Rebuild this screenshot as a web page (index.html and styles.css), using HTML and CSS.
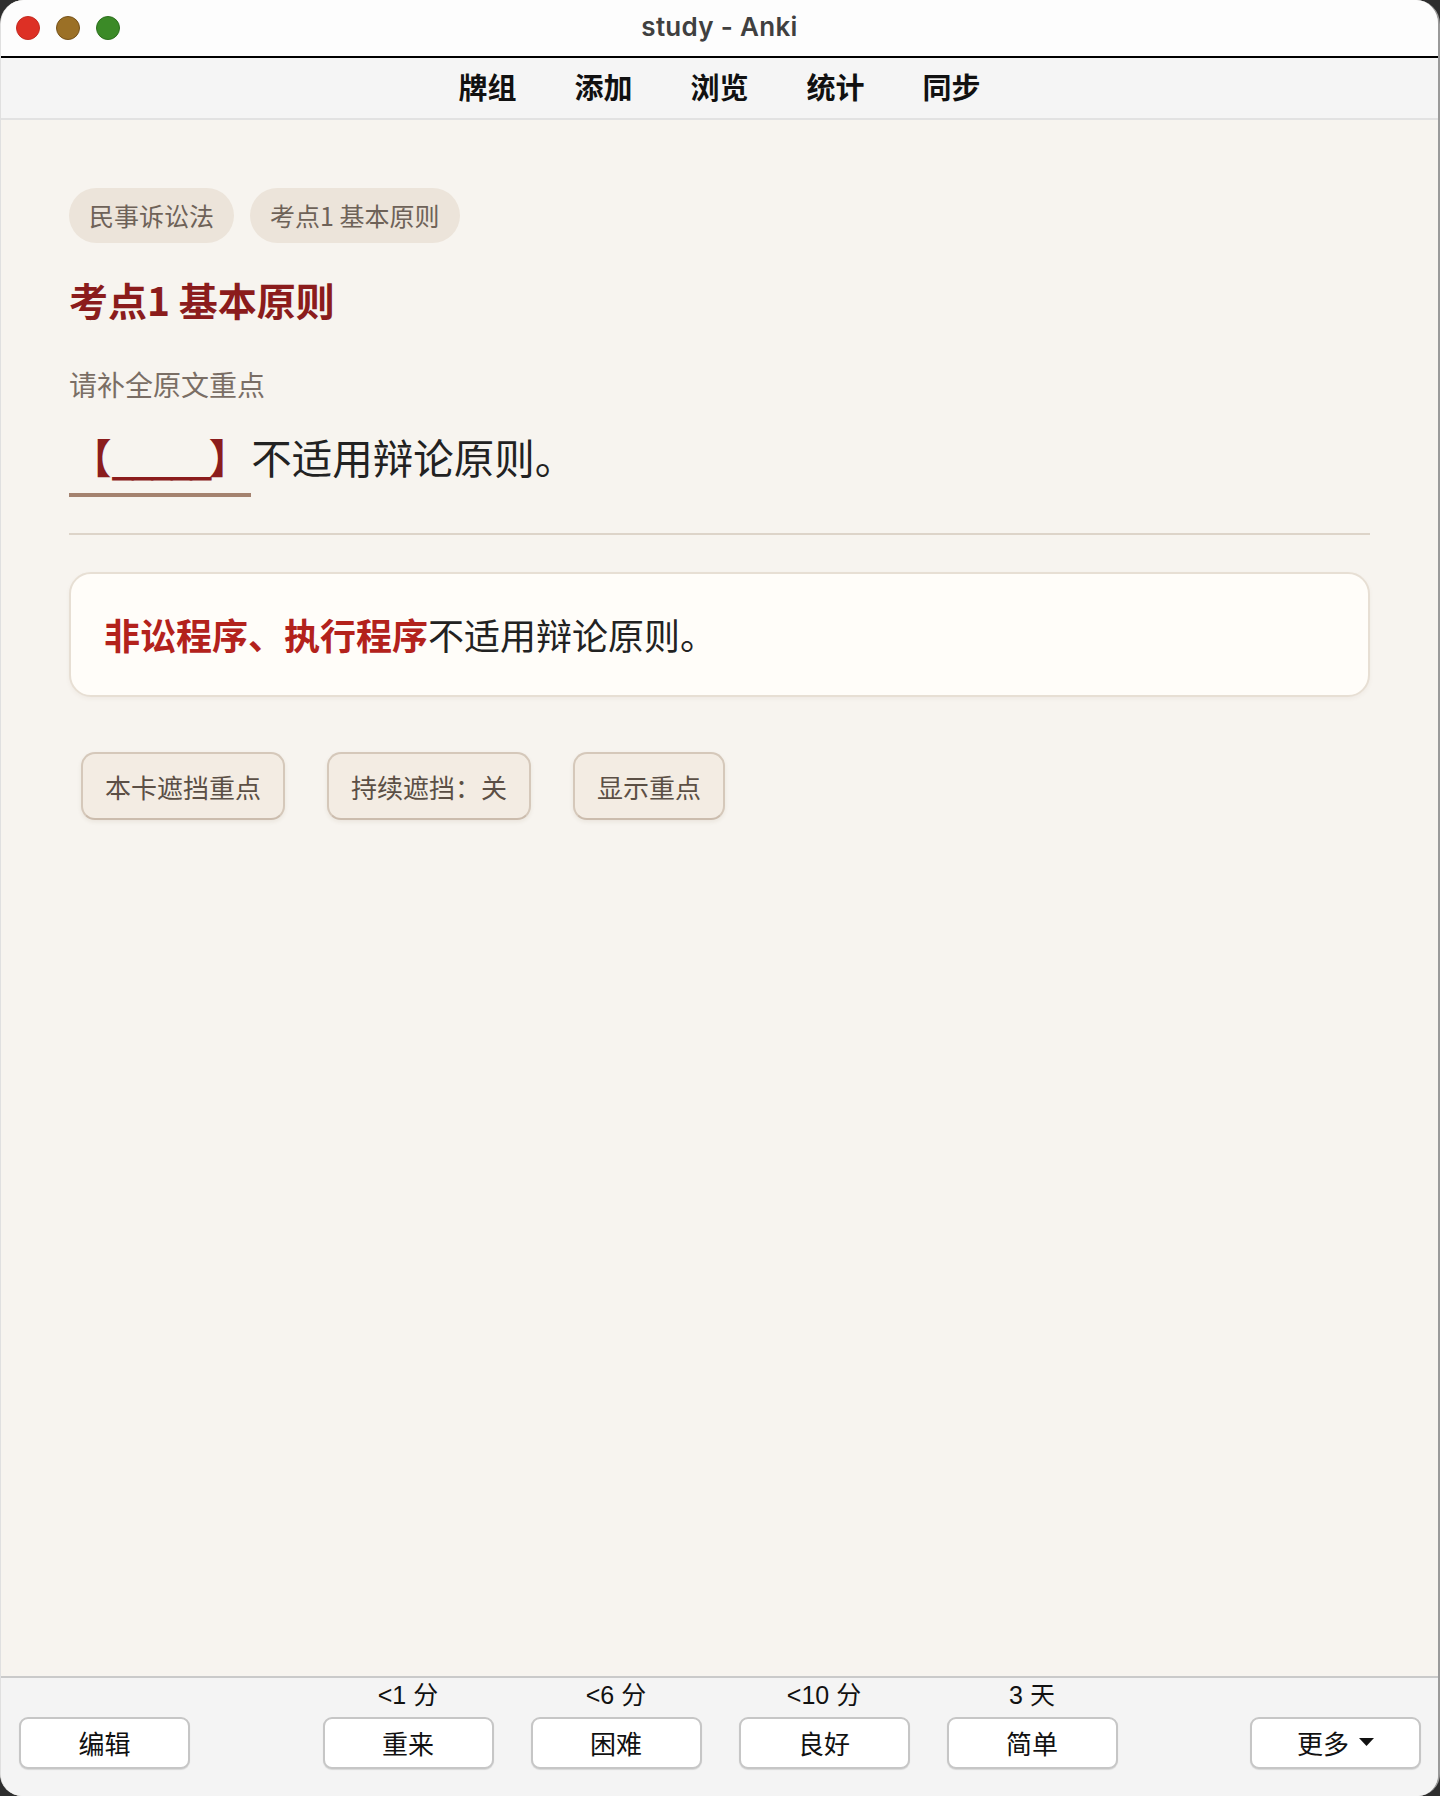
FILE: index.html
```html
<!DOCTYPE html>
<html lang="zh-CN">
<head>
    <meta charset="UTF-8">
    <meta name="viewport" content="width=device-width, initial-scale=1.0">
    <title>study - Anki</title>
    <link rel="stylesheet" href="styles.css">
</head>
<body>
    <div class="window">
        <header class="titlebar">
            <div class="lights">
                <span class="light red"></span>
                <span class="light yellow"></span>
                <span class="light green"></span>
            </div>
            <div class="title">study - Anki</div>
            <div></div>
        </header>

        <nav class="toolbar">
            <a class="nav-item">牌组</a>
            <a class="nav-item">添加</a>
            <a class="nav-item">浏览</a>
            <a class="nav-item">统计</a>
            <a class="nav-item">同步</a>
        </nav>

        <main class="card">
            <div class="tags">
                <span class="tag">民事诉讼法</span>
                <span class="tag">考点1 基本原则</span>
            </div>

            <h1 class="card-title">考点1 基本原则</h1>

            <p class="prompt">请补全原文重点</p>

            <p class="cloze-line"><span class="cloze">【<span class="blank">_____</span>】</span>不适用辩论原则。</p>

            <div class="divider"></div>

            <div class="answer">
                <strong>非讼程序、执行程序</strong>不适用辩论原则。
            </div>

            <div class="actions">
                <button class="action-btn">本卡遮挡重点</button>
                <button class="action-btn">持续遮挡：关</button>
                <button class="action-btn">显示重点</button>
            </div>
        </main>

        <footer class="bottombar">
            <div class="side side-left">
                <button class="bar-btn">编辑</button>
            </div>
            <div class="answers">
                <div class="answer-col">
                    <div class="due">&lt;1 分</div>
                    <button class="bar-btn">重来</button>
                </div>
                <div class="answer-col">
                    <div class="due">&lt;6 分</div>
                    <button class="bar-btn">困难</button>
                </div>
                <div class="answer-col">
                    <div class="due">&lt;10 分</div>
                    <button class="bar-btn">良好</button>
                </div>
                <div class="answer-col">
                    <div class="due">3 天</div>
                    <button class="bar-btn">简单</button>
                </div>
            </div>
            <div class="side side-right">
                <button class="bar-btn more">更多
                    <svg class="caret" width="15" height="8" viewBox="0 0 15 8"><path d="M0 0 H15 L7.5 8 Z" fill="#111"/></svg>
                </button>
            </div>
        </footer>
    </div>
</body>
</html>
```

FILE: styles.css
```css
body {
    margin: 0;
    background-color: #2e2e2e;
    font-family: "Noto Sans CJK SC", "Noto Sans", sans-serif;
}

.window {
    width: 1440px;
    height: 1796px;
    box-sizing: border-box;
    display: flex;
    flex-direction: column;
    border-radius: 24px 24px 22px 22px;
    overflow: hidden;
    background-color: #f7f4ef;
    border-left: 1px solid #e0e0e0;
    border-right: 2px solid #9a9a9a;
}

/* 窗口标题栏 */
.titlebar {
    height: 56px;
    display: grid;
    grid-template-columns: 1fr auto 1fr;
    align-items: center;
    background-color: #fdfdfd;
    border-bottom: 2px solid #000;
}

.lights {
    display: flex;
    gap: 16px;
    padding-left: 15px;
}

.light {
    width: 22px;
    height: 22px;
    border-radius: 50%;
    border: 1px solid transparent;
}

.red {
    background-color: #dd3025;
    border-color: #c42a20;
}

.yellow {
    background-color: #9b7026;
    border-color: #76521a;
}

.green {
    background-color: #3b8a27;
    border-color: #2c6f1d;
}

.title {
    font-family: "Inter", "Liberation Sans", sans-serif;
    font-weight: 600;
    font-size: 26px;
    color: #404040;
    letter-spacing: 0.3px;
    padding-bottom: 4px;
}

/* 顶部导航 */
.toolbar {
    height: 62px;
    box-sizing: border-box;
    padding-bottom: 5px;
    display: flex;
    justify-content: center;
    align-items: center;
    gap: 58px;
    background-color: #f5f5f5;
    border-bottom: 2px solid #e2e2e2;
}

.nav-item {
    font-size: 29px;
    font-weight: 700;
    color: #111;
    cursor: pointer;
}

/* 卡片内容 */
.card {
    flex: 1;
    padding: 68px 68px 0 68px;
}

.tags {
    display: flex;
    gap: 16px;
    margin-bottom: 32px;
}

.tag {
    height: 55px;
    line-height: 55px;
    padding: 0 20px;
    border-radius: 28px;
    background-color: #ece4da;
    color: #6e6258;
    font-size: 25px;
}

.card-title {
    margin: 0 0 41px;
    font-size: 39px;
    line-height: 49px;
    font-weight: 700;
    color: #8b1c1c;
}

.prompt {
    margin: 0 0 28px;
    font-size: 28px;
    line-height: 38px;
    color: #7a6e65;
}

.cloze-line {
    margin: 0;
    font-size: 40.5px;
    line-height: 52px;
    color: #222;
}

.cloze {
    display: inline-block;
    padding: 0 2px 10px 2px;
    border-bottom: 4px solid #a4826f;
    color: #8b1c1c;
    font-weight: 700;
}

.blank {
    letter-spacing: -3.5px;
}

.divider {
    height: 2px;
    margin: 36px 0 37px;
    background-color: #ddd4c9;
}

.answer {
    padding: 32px 33px;
    border: 2px solid #e7dfd4;
    border-radius: 22px;
    background-color: #fffdf9;
    box-shadow: 0 2px 4px rgba(120, 90, 60, 0.06);
    font-size: 36px;
    line-height: 57px;
    color: #222;
}

.answer strong {
    color: #b3221c;
    font-weight: 700;
}

.actions {
    display: flex;
    gap: 42px;
    margin-top: 55px;
    padding-left: 12px;
}

.action-btn {
    height: 68px;
    padding: 0 22px;
    border: 2px solid #d5c8ba;
    border-bottom-color: #cbbcad;
    border-radius: 14px;
    background-color: #f3ece3;
    box-shadow: 0 2px 4px rgba(90, 60, 30, 0.08);
    font-family: "Noto Sans CJK SC", sans-serif;
    font-size: 26px;
    color: #5b4f45;
    cursor: pointer;
}

/* 底部答题栏 */
.bottombar {
    height: 120px;
    box-sizing: border-box;
    display: grid;
    grid-template-columns: 1fr auto 1fr;
    align-items: end;
    padding: 2px 17px 28px 18px;
    background-color: #f4f4f4;
    border-top: 2px solid #cacaca;
}

.side-right {
    justify-self: end;
}

.answers {
    display: flex;
    gap: 37px;
}

.answer-col {
    display: flex;
    flex-direction: column;
    align-items: center;
}

.due {
    height: 30px;
    line-height: 30px;
    margin-bottom: 7px;
    font-family: "Liberation Sans", "Noto Sans CJK SC", sans-serif;
    font-size: 25px;
    color: #111;
}

.bar-btn {
    width: 171px;
    height: 52px;
    border: 2px solid #c6c6c6;
    border-radius: 9px;
    background-color: #fff;
    box-shadow: 0 1px 1px rgba(0, 0, 0, 0.12);
    font-family: "Liberation Sans", "Noto Sans CJK SC", sans-serif;
    font-size: 26px;
    color: #111;
    padding-bottom: 3px;
    cursor: pointer;
}

.more {
    display: flex;
    justify-content: center;
    align-items: center;
    gap: 10px;
}
```
